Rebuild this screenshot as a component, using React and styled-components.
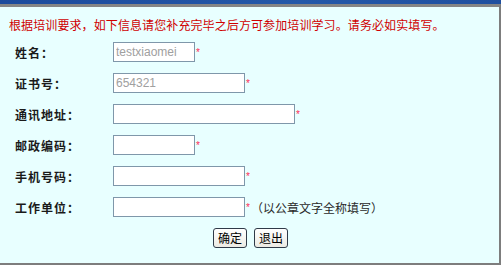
import React from "react";
import styled, { createGlobalStyle } from "styled-components";

const Global = createGlobalStyle`
  html, body { margin: 0; padding: 0; background: #e8ffff; }
  body { font-family: "Noto Sans CJK SC", "Liberation Sans", sans-serif; }
  * { box-sizing: border-box; }
`;

const Page = styled.div`
  width: 501px;
  height: 265px;
  display: flex;
  flex-direction: column;
`;

const TopBar = styled.div`
  height: 4px;
  background: linear-gradient(90deg, #1b4a9c, #2458a8 60%, #1f4f9f);
`;

const Panel = styled.div`
  flex: 1;
  background: #e8ffff;
  border-top: 3px solid #858585;
  border-right: 2px solid #7d7d7d;
  border-bottom: 2px solid #7d7d7d;
  padding: 11px 0 0 9px;
`;

const Notice = styled.div`
  font-size: 12px;
  line-height: 14px;
  color: #d00000;
  letter-spacing: 0.1px;
  white-space: nowrap;
`;

const Form = styled.div`
  margin: 10px 0 0 6px;
  display: grid;
  grid-template-columns: 98px auto;
  grid-auto-rows: 20px;
  row-gap: 11px;
  align-items: center;
`;

const Label = styled.div`
  font-size: 12px;
  font-weight: bold;
  color: #1a1a1a;
  letter-spacing: 1px;
  white-space: nowrap;
`;

const Field = styled.div`
  display: flex;
  align-items: center;
  height: 20px;
`;

const Input = styled.input`
  width: ${(p) => p.$w}px;
  height: 20px;
  border: 1px solid #7f97aa;
  background: #fff;
  padding: 0 2px;
  margin: 0;
  font-family: "Liberation Sans", Arial, sans-serif;
  font-size: 12px;
  color: #a0a0a0;
  outline: none;
`;

const Star = styled.span`
  color: #ff2a55;
  font-family: "Liberation Sans", Arial, sans-serif;
  font-size: 10px;
  margin-left: 1px;
  line-height: 1;
  position: relative;
  top: 1px;
`;

const Note = styled.span`
  font-size: 12px;
  color: #2a2a2a;
  margin-left: 1px;
  white-space: nowrap;
`;

const Buttons = styled.div`
  grid-column: 2;
  display: flex;
  gap: 7px;
  margin-left: 100px;
  height: 20px;
`;

const Button = styled.button`
  width: 34px;
  height: 20px;
  padding: 0;
  border: 1px solid #2f3a48;
  border-radius: 3px;
  background: linear-gradient(#ffffff, #ecebe4);
  font-family: "Noto Sans CJK SC", sans-serif;
  font-size: 12px;
  line-height: 18px;
  color: #000;
`;

const rows = [
  { label: "姓名：", w: 82, value: "testxiaomei" },
  { label: "证书号：", w: 132, value: "654321" },
  { label: "通讯地址：", w: 182, value: "" },
  { label: "邮政编码：", w: 82, value: "" },
  { label: "手机号码：", w: 132, value: "" },
  { label: "工作单位：", w: 132, value: "", note: "（以公章文字全称填写）" },
];

export default function App() {
  return (
    <>
      <Global />
      <Page>
        <TopBar />
        <Panel>
          <Notice>根据培训要求，如下信息请您补充完毕之后方可参加培训学习。请务必如实填写。</Notice>
          <Form>
            {rows.map((r) => (
              <React.Fragment key={r.label}>
                <Label>{r.label}</Label>
                <Field>
                  <Input $w={r.w} defaultValue={r.value} readOnly />
                  <Star>*</Star>
                  {r.note && <Note>{r.note}</Note>}
                </Field>
              </React.Fragment>
            ))}
            <Buttons>
              <Button>确定</Button>
              <Button>退出</Button>
            </Buttons>
          </Form>
        </Panel>
      </Page>
    </>
  );
}
